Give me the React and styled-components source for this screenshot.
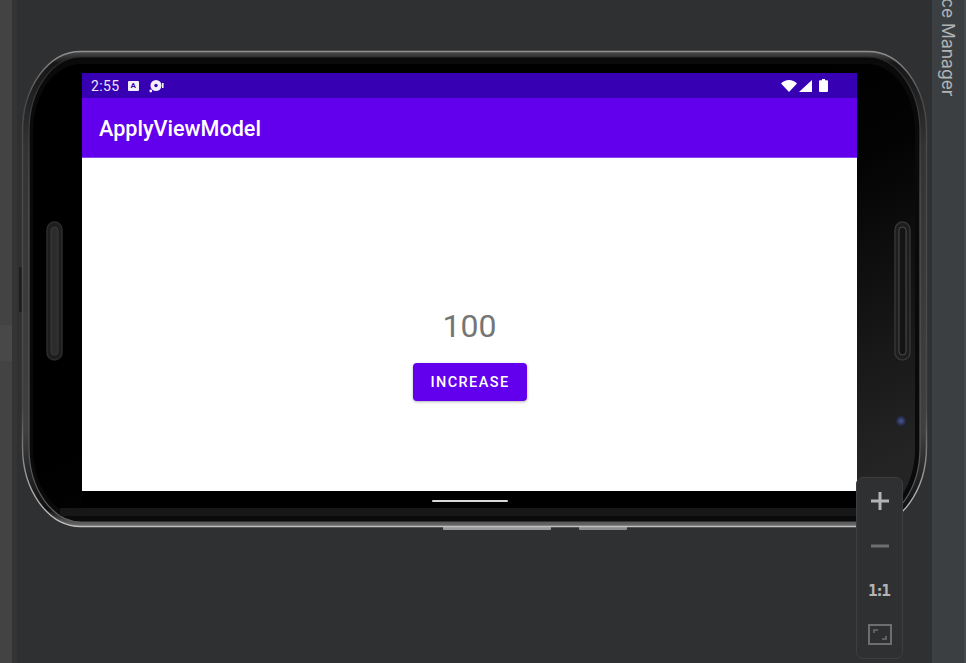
import React from "react";
import styled, { createGlobalStyle } from "styled-components";

const Global = createGlobalStyle`
  html, body { margin: 0; padding: 0; background: #2f3032; overflow: hidden; }
  #root { width: 966px; height: 663px; }
`;

const Page = styled.div`
  display: flex;
  width: 966px;
  height: 663px;
  overflow: hidden;
  background: #2f3032;
  font-family: Roboto, "Liberation Sans", sans-serif;
`;

const LeftRail = styled.div`
  width: 12px;
  flex: none;
  display: flex;
  flex-direction: column;
  background: #434343;
  border-right: 5px solid #333436;
`;

const RailTab = styled.div`
  height: 36px;
  margin-top: 325px;
  background: #484848;
`;

const Canvas = styled.main`
  flex: 1;
  position: relative;
  padding: 51px 0 0 5px;
  min-width: 0;
`;

const SidePanel = styled.aside`
  width: 32px;
  flex: none;
  display: flex;
  justify-content: center;
  background: #3c3f41;
  border-right: 2px solid #46494b;
  overflow: hidden;
`;

const SideLabel = styled.span`
  writing-mode: vertical-rl;
  margin-top: -2px;
  font-family: Inter, Roboto, sans-serif;
  font-size: 17.5px;
  line-height: 20px;
  color: #b0b4b7;
  white-space: nowrap;
`;

const Phone = styled.div`
  position: relative;
  width: 905px;
  height: 476px;
  padding: 22px 70px 36px 60px;
  box-sizing: border-box;
`;

const Bezel = styled.svg`
  position: absolute;
  left: 0;
  top: 0;
  width: 905px;
  height: 479px;
  overflow: visible;
`;

const Screen = styled.div`
  position: relative;
  display: flex;
  flex-direction: column;
  height: 418px;
  background: #fff;
`;

const StatusBar = styled.div`
  height: 25px;
  flex: none;
  display: flex;
  align-items: center;
  padding: 0 29px 0 9px;
  background: #3700b3;
  color: #eee7fa;
`;

const Time = styled.span`
  font-size: 14px;
  letter-spacing: 0.4px;
`;

const NoticeA = styled.span`
  width: 11px;
  height: 10px;
  margin-left: 8px;
  display: flex;
  align-items: center;
  justify-content: center;
  border-radius: 1px;
  background: #f3effb;
  color: #3700b3;
  font-size: 8px;
  font-weight: 700;
  line-height: 10px;
`;

const StatusIcon = styled.svg`
  display: block;
  flex: none;
  margin-left: ${(p) => p.$gap || 0}px;
`;

const Spacer = styled.div`
  flex: 1;
`;

const AppBar = styled.header`
  height: 60px;
  flex: none;
  display: flex;
  align-items: center;
  padding: 2px 0 0 17px;
  background: #6200ee;
  border-bottom: 1px solid #8a45f0;
  box-sizing: border-box;
  color: #fff;
  font-size: 21.6px;
  font-weight: 500;
`;

const Content = styled.div`
  flex: 1;
  display: flex;
  flex-direction: column;
  align-items: center;
  padding-top: 149px;
`;

const Counter = styled.div`
  font-size: 32px;
  line-height: 38px;
  color: #757575;
`;

const Increase = styled.button`
  width: 114px;
  height: 38px;
  margin-top: 18px;
  padding: 0 0 0 1px;
  border: 0;
  border-radius: 4px;
  background: #6200ee;
  box-shadow: 0 1px 3px rgba(0, 0, 0, 0.3);
  color: #fff;
  font-family: Roboto, sans-serif;
  font-size: 14.5px;
  font-weight: 500;
  letter-spacing: 1.4px;
`;

const ZoomBar = styled.div`
  position: absolute;
  left: 839px;
  top: 477px;
  width: 47px;
  height: 182px;
  box-sizing: border-box;
  display: flex;
  flex-direction: column;
  align-items: center;
  justify-content: space-between;
  padding: 12px 0 12px;
  background: #2f3032;
  border: 1px solid #3d3e40;
  border-radius: 7px;
`;

const ZoomCell = styled.div`
  width: 24px;
  height: 22px;
  display: flex;
  align-items: center;
  justify-content: center;
  color: ${(p) => (p.$dim ? "#6e6e6e" : "#b4b4b4")};
`;

const OneToOne = styled.span`
  font-family: "DejaVu Sans Mono", "Liberation Mono", monospace;
  font-size: 16px;
  font-weight: 700;
  letter-spacing: -3px;
  margin-left: -3px;
`;

export default function App() {
  return (
    <Page>
      <Global />
      <LeftRail>
        <RailTab />
      </LeftRail>
      <Canvas>
        <Phone>
          <Bezel viewBox="22 51 905 479" aria-hidden="true">
            <defs>
              <linearGradient id="rim" x1="0" y1="0" x2="0" y2="1">
                <stop offset="0" stopColor="#8f8f8f" />
                <stop offset="0.1" stopColor="#4a4a4a" />
                <stop offset="0.75" stopColor="#4a4a4a" />
                <stop offset="0.92" stopColor="#a8a8a8" />
                <stop offset="1" stopColor="#c0c0c0" />
              </linearGradient>
              <linearGradient id="band" x1="0" y1="0" x2="0" y2="1">
                <stop offset="0" stopColor="#4a4a4a" />
                <stop offset="0.025" stopColor="#161616" />
                <stop offset="0.2" stopColor="#333" />
                <stop offset="0.8" stopColor="#404040" />
                <stop offset="0.965" stopColor="#101010" />
                <stop offset="1" stopColor="#707070" />
              </linearGradient>
              <linearGradient id="ring" x1="0" y1="0" x2="0" y2="1">
                <stop offset="0" stopColor="#2a2a2a" />
                <stop offset="0.3" stopColor="#555" />
                <stop offset="0.85" stopColor="#555" />
                <stop offset="1" stopColor="#5c5c5c" />
              </linearGradient>
              <linearGradient id="face" x1="0.35" y1="0.5" x2="0.85" y2="1">
                <stop offset="0" stopColor="#000" />
                <stop offset="0.3" stopColor="#030303" />
                <stop offset="1" stopColor="#242424" />
              </linearGradient>
              <radialGradient id="lens">
                <stop offset="0" stopColor="#4a5a96" />
                <stop offset="0.6" stopColor="#2a3050" />
                <stop offset="1" stopColor="#1c1c20" />
              </radialGradient>
            </defs>
            <rect x="443" y="526" width="108" height="4" rx="1" fill="#9a9a9a" />
            <rect x="579" y="526" width="48" height="4" rx="1" fill="#8c8c8c" />
            <rect x="19" y="267" width="3" height="45" rx="1" fill="#1d1d1d" />
            <rect x="22.5" y="51.5" width="904" height="475" rx="58" ry="80" fill="url(#band)" stroke="url(#rim)" strokeWidth="1.4" />
            <rect x="29" y="57" width="891" height="465" rx="52" ry="74" fill="#0a0a0a" stroke="url(#ring)" strokeWidth="1.2" />
            <rect x="33" y="64" width="882" height="452" rx="48" ry="67" fill="url(#face)" />
            <rect x="60" y="508" width="830" height="8" fill="#171717" />
            <rect x="82" y="491" width="775" height="17" fill="#000" />
            <rect x="47" y="222" width="15" height="138" rx="7.5" fill="#1e1e1e" stroke="#2c2c2c" strokeWidth="1.5" />
            <rect x="51" y="227" width="7" height="128" rx="3.5" fill="#2c2c2c" stroke="#3a3a3a" />
            <rect x="895" y="222" width="15" height="138" rx="7.5" fill="#1e1e1e" stroke="#353535" strokeWidth="1.5" />
            <rect x="899" y="227" width="7" height="128" rx="3.5" fill="#141414" stroke="#4d4d4d" />
            <circle cx="901" cy="421" r="6" fill="url(#lens)" />
            <rect x="432" y="500" width="76" height="2" rx="1" fill="#d8d8d8" />
          </Bezel>
          <Screen>
            <StatusBar>
              <Time>2:55</Time>
              <NoticeA>A</NoticeA>
              <StatusIcon $gap={10} width="15" height="14" viewBox="0 0 15 14">
                <circle cx="7" cy="6.5" r="5.5" fill="#f3effb" />
                <circle cx="7" cy="6.5" r="1.7" fill="#3700b3" />
                <rect x="13" y="4" width="1.6" height="5" fill="#f3effb" />
                <circle cx="1.8" cy="12" r="1.4" fill="#f3effb" />
              </StatusIcon>
              <Spacer />
              <StatusIcon width="16" height="12" viewBox="0 0 16 12">
                <path d="M0 3.4C2 1.3 5 0 8 0s6 1.3 8 3.4L8 12z" fill="#fff" />
              </StatusIcon>
              <StatusIcon $gap={2} width="13" height="12" viewBox="0 0 13 12">
                <path d="M13 0v12H0z" fill="#fff" />
              </StatusIcon>
              <StatusIcon $gap={7} width="9" height="13" viewBox="0 0 9 13">
                <path d="M3 0h3v1.3h2a1 1 0 0 1 1 1V12a1 1 0 0 1-1 1H1a1 1 0 0 1-1-1V2.3a1 1 0 0 1 1-1h2z" fill="#fff" />
              </StatusIcon>
            </StatusBar>
            <AppBar>ApplyViewModel</AppBar>
            <Content>
              <Counter>100</Counter>
              <Increase>INCREASE</Increase>
            </Content>
          </Screen>
        </Phone>
        <ZoomBar>
          <ZoomCell>
            <svg width="18" height="18" viewBox="0 0 18 18">
              <path d="M0 7.5h18v3H0zM7.5 0h3v18h-3z" fill="currentColor" />
            </svg>
          </ZoomCell>
          <ZoomCell $dim>
            <svg width="18" height="4" viewBox="0 0 18 4">
              <rect width="18" height="3" y="0.5" fill="currentColor" />
            </svg>
          </ZoomCell>
          <ZoomCell>
            <OneToOne>1:1</OneToOne>
          </ZoomCell>
          <ZoomCell $dim>
            <svg width="24" height="21" viewBox="0 0 24 21">
              <rect x="1" y="1" width="22" height="19" fill="none" stroke="currentColor" strokeWidth="2" />
              <path d="M6 9V6h4M18 12v3h-4" fill="none" stroke="currentColor" strokeWidth="1.6" />
            </svg>
          </ZoomCell>
        </ZoomBar>
      </Canvas>
      <SidePanel>
        <SideLabel>ce Manager</SideLabel>
      </SidePanel>
    </Page>
  );
}
